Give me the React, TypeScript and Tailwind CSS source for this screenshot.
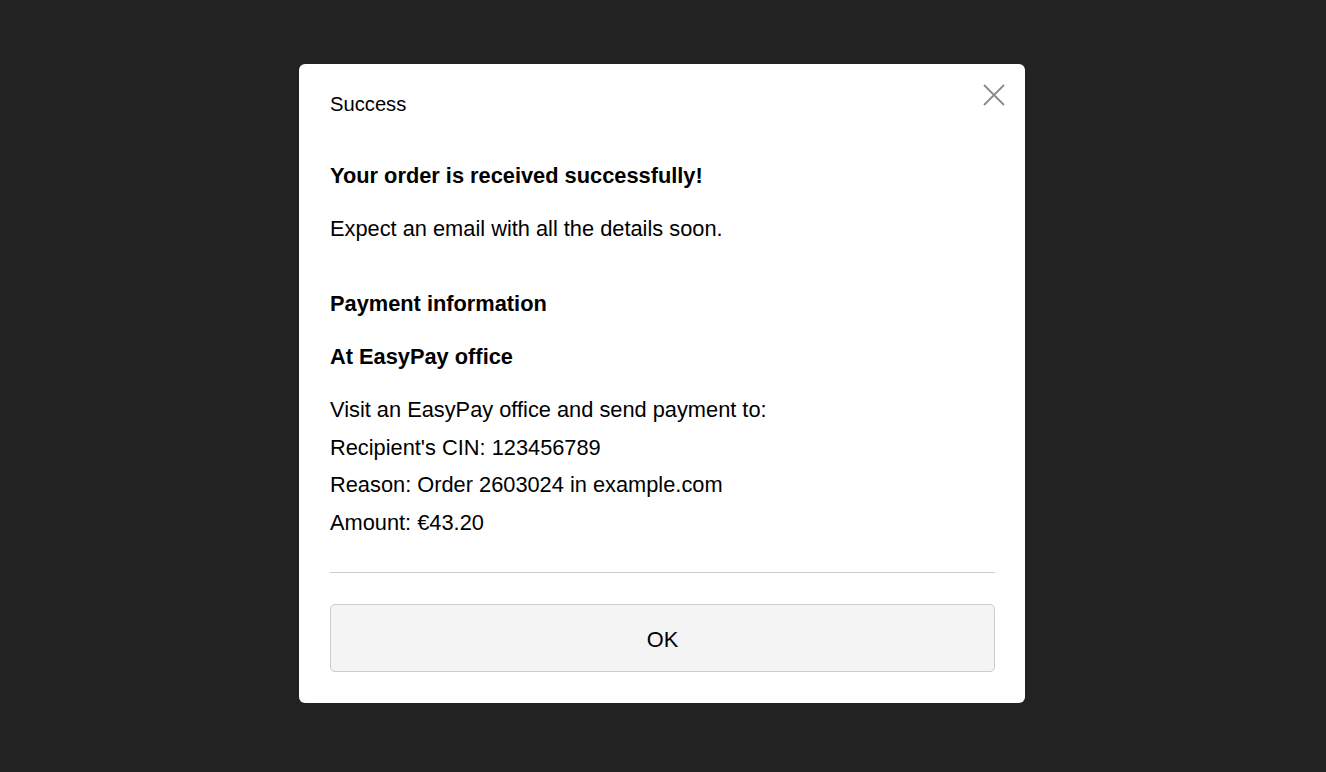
export default function App() {
  return (
    <div
      className="w-full h-[772px] bg-[#222222] flex items-start justify-center pt-16"
      style={{ fontFamily: '"Liberation Sans", Arial, sans-serif' }}
    >
      <div className="relative w-[726px] mr-[2px] bg-white rounded-md pl-[31px] pr-[30px] pt-[28px] pb-[31px] text-black">
        <button className="absolute right-[20px] top-[20px] w-[22px] h-[22px] text-[#8a8a8a]" aria-label="Close">
          <svg viewBox="0 0 22 22" className="w-full h-full" fill="none" stroke="currentColor" strokeWidth="1.8">
            <path d="M1 1 L21 21 M21 1 L1 21" />
          </svg>
        </button>
        <div className="text-[20.2px] leading-[24px]">Success</div>

        <div className="mt-[47px] text-[21.8px] leading-[26px] font-bold">
          Your order is received successfully!
        </div>
        <p className="mt-[28px] text-[21.8px] leading-[24px]">Expect an email with all the details soon.</p>

        <div className="mt-[50px] text-[21.8px] leading-[26px] font-bold">Payment information</div>
        <div className="mt-[27px] text-[21.8px] leading-[26px] font-bold">At EasyPay office</div>

        <div className="mt-[21px] text-[21.8px] leading-[37.7px]">
          <div>Visit an EasyPay office and send payment to:</div>
          <div>Recipient's CIN: 123456789</div>
          <div>Reason: Order 2603024 in example.com</div>
          <div>Amount: €43.20</div>
        </div>

        <div className="mt-[30px] border-t border-[#cccccc]" />

        <button className="mt-[31px] w-full h-[68px] pt-[5px] bg-[#f4f4f4] border border-[#cccccc] rounded-[5px] text-[21.8px]">
          OK
        </button>
      </div>
    </div>
  );
}
